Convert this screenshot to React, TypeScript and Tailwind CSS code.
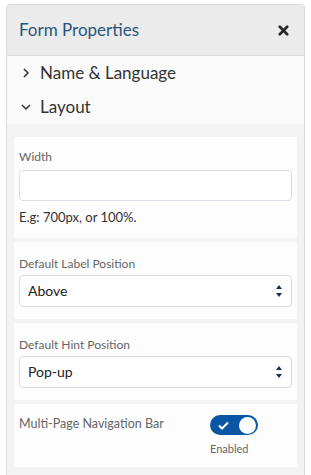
import React from 'react';

function Chevron({ open }: { open: boolean }) {
  return (
    <svg width="12" height="12" viewBox="0 0 12 12" className="shrink-0">
      {open ? (
        <path d="M2 4l4 4 4-4" fill="none" stroke="#333" strokeWidth="1.5" />
      ) : (
        <path d="M4 2l4 4-4 4" fill="none" stroke="#333" strokeWidth="1.5" />
      )}
    </svg>
  );
}

function SelectArrows() {
  return (
    <svg width="6" height="14" viewBox="0 0 6 14">
      <path d="M3 1l3 4h-6z" fill="#16325c" />
      <path d="M3 13l3-4h-6z" fill="#16325c" />
    </svg>
  );
}

function Card({ children, className }: { children: React.ReactNode; className: string }) {
  return <div className={`bg-[#fdfdfd] px-[5px] ${className}`}>{children}</div>;
}

function SelectBox({ value }: { value: string }) {
  return (
    <div className="flex h-[32px] items-center justify-between rounded-[4px] border border-[#d8dde6] bg-white pl-[8px] pr-[9px] text-[14px] leading-[18px] text-[#222]">
      <span>{value}</span>
      <SelectArrows />
    </div>
  );
}

export default function App() {
  return (
    <div className="min-h-[475px] bg-white pt-[4px] pl-[6px] pr-[6px] font-['Lato',sans-serif]">
      <div className="rounded-t-[4px] border border-b-0 border-[#dddbda] bg-[#f3f3f3] min-h-[471px]">
        <div className="flex h-[51px] items-center justify-between border-b border-[#dddbda] bg-[#ebebeb] pl-[12px] pr-[15px]">
          <span className="text-[17px] leading-[20px] text-[#285580]">Form Properties</span>
          <svg width="11" height="11" viewBox="0 0 12 12">
            <path d="M2 2l8 8M10 2l-8 8" stroke="#2b2b2b" strokeWidth="3" strokeLinecap="round" />
          </svg>
        </div>
        <div className="bg-[#fafafa]">
          <div className="flex h-[34px] items-center gap-[8px] pl-[13px] text-[17px] leading-[20px] text-[#333]">
            <Chevron open={false} />
            <span>Name &amp; Language</span>
          </div>
          <div className="flex h-[34px] items-center gap-[8px] pl-[13px] text-[17px] leading-[20px] text-[#333]">
            <Chevron open={true} />
            <span>Layout</span>
          </div>
        </div>
        <div className="flex flex-col gap-[4px] px-[7px] pt-[13px] pb-[8px]">
          <Card className="pt-[13px] pb-[13px]">
            <div className="text-[12px] leading-[14px] text-[#666]">Width</div>
            <div className="mt-[6px] h-[31px] rounded-[4px] border border-[#d8dde6] bg-white" />
            <div className="mt-[8px] text-[13px] leading-[16px] text-[#333]">E.g: 700px, or 100%.</div>
          </Card>
          <Card className="pt-[15px] pb-[12px]">
            <div className="text-[12px] leading-[14px] text-[#666]">Default Label Position</div>
            <div className="mt-[4px]">
              <SelectBox value="Above" />
            </div>
          </Card>
          <Card className="pt-[15px] pb-[12px]">
            <div className="text-[12px] leading-[14px] text-[#666]">Default Hint Position</div>
            <div className="mt-[4px]">
              <SelectBox value="Pop-up" />
            </div>
          </Card>
          <Card className="pt-[11px] pb-[12px]">
            <div className="flex">
              <div className="mt-[2px] w-[191px] text-[12.5px] leading-[14px] text-[#666]">Multi-Page Navigation Bar</div>
              <div className="flex flex-col items-start">
                <div className="flex h-[20px] w-[48px] items-center justify-between rounded-full bg-[#0b56a4] pl-[8px] pr-[2px]">
                  <svg width="11" height="9" viewBox="0 0 11 9">
                    <path d="M1 4.5l3 3 6-6" fill="none" stroke="white" strokeWidth="2" />
                  </svg>
                  <div className="h-[17px] w-[17px] rounded-full bg-white" />
                </div>
                <div className="mt-[7px] text-[11px] leading-[13px] text-[#666]">Enabled</div>
              </div>
            </div>
          </Card>
        </div>
      </div>
    </div>
  );
}
